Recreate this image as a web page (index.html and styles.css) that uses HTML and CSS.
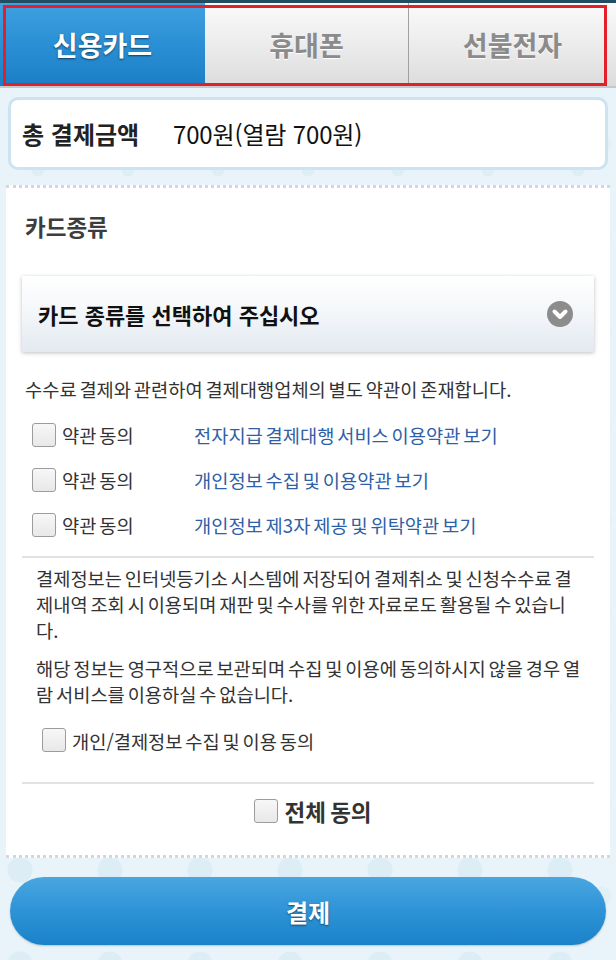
FILE: index.html
```html
<!DOCTYPE html>
<html lang="ko">
<head>
<meta charset="utf-8">
<title>결제</title>
<link rel="stylesheet" href="styles.css">
</head>
<body>
<div class="page">
  <div class="tabs-wrap">
    <nav class="tabs">
      <div class="tab active">신용카드</div>
      <div class="tab">휴대폰</div>
      <div class="tab">선불전자</div>
    </nav>
    <div class="highlight"></div>
  </div>

  <div class="amount">
    <span class="amount-label">총 결제금액</span>
    <span class="amount-value">700원(열람 700원)</span>
  </div>

  <section class="panel">
    <h2 class="section-title">카드종류</h2>
    <div class="select">
      <span>카드 종류를 선택하여 주십시오</span>
      <svg class="select-icon" width="28" height="28" viewBox="0 0 28 28">
        <circle cx="14" cy="14" r="13" fill="#8c8c8c"/>
        <polyline points="8.5,11.5 14,17 19.5,11.5" fill="none" stroke="#fff" stroke-width="4" stroke-linecap="round" stroke-linejoin="round"/>
      </svg>
    </div>

    <p class="notice">수수료 결제와 관련하여 결제대행업체의 별도 약관이 존재합니다.</p>
    <ul class="terms">
      <li><span class="check"></span><span class="agree">약관 동의</span><a class="link">전자지급 결제대행 서비스 이용약관 보기</a></li>
      <li><span class="check"></span><span class="agree">약관 동의</span><a class="link">개인정보 수집 및 이용약관 보기</a></li>
      <li><span class="check"></span><span class="agree">약관 동의</span><a class="link">개인정보 제3자 제공 및 위탁약관 보기</a></li>
    </ul>

    <div class="info">
      <p>결제정보는 인터넷등기소 시스템에 저장되어 결제취소 및 신청수수료 결제내역 조회 시 이용되며 재판 및 수사를 위한 자료로도 활용될 수 있습니다.</p>
      <p>해당 정보는 영구적으로 보관되며 수집 및 이용에 동의하시지 않을 경우 열람 서비스를 이용하실 수 없습니다.</p>
      <div class="personal"><span class="check"></span><span>개인/결제정보 수집 및 이용 동의</span></div>
    </div>

    <div class="all"><span class="check"></span><span>전체 동의</span></div>
  </section>

  <button class="pay">결제</button>
</div>
</body>
</html>
```

FILE: styles.css
```css
html, body {
  margin: 0;
  padding: 0;
}
body {
  width: 616px;
  height: 960px;
  overflow: hidden;
  font-family: "Noto Sans CJK KR", "Noto Sans", sans-serif;
  color: #333;
  background-color: #e8f4f9;
  background-image:
    radial-gradient(circle at 20px 24px, #dcedf5 0 12px, transparent 13px),
    radial-gradient(circle at 62px 50px, #e0f0f7 0 9px, transparent 10px),
    radial-gradient(circle at 38px 76px, #deeef6 0 6px, transparent 7px);
  background-size: 90px 94px, 90px 94px, 90px 94px;
}
.page {
  display: flex;
  flex-direction: column;
}

/* Tabs */
.tabs-wrap {
  position: relative;
}
.tabs {
  display: grid;
  grid-template-columns: 205px 203px 1fr;
  height: 83px;
  border-top: 3px solid #1f4d62;
  border-bottom: 2px solid #c6c9cb;
}
.tab {
  display: flex;
  align-items: center;
  justify-content: center;
  font-size: 27px;
  font-weight: 700;
  color: #8b8b8b;
  text-shadow: 0 1px 1px #fff;
  background: linear-gradient(#fafafa, #e9e9e9 60%, #dcdcdc);
}
.tab + .tab {
  border-left: 1px solid #a0a0a0;
}
.tab.active {
  color: #fff;
  background: linear-gradient(#3fa1e0, #2a8fd4 50%, #1b7fc5);
  text-shadow: 0 1px 2px rgba(0, 0, 0, 0.55);
}
.tab.active + .tab {
  border-left: none;
}
.highlight {
  position: absolute;
  left: 3px;
  top: 5px;
  width: 598px;
  height: 75px;
  border: 3px solid #e41e2b;
  pointer-events: none;
}

/* Amount */
.amount {
  margin: 9px 8px 0;
  height: 73px;
  box-sizing: border-box;
  border: 3px solid #cde3ef;
  border-radius: 10px;
  background: #fff;
  display: flex;
  align-items: center;
  padding-left: 11px;
}
.amount-label {
  font-size: 24px;
  font-weight: 700;
  color: #222;
  width: 151px;
}
.amount-value {
  font-size: 24px;
  color: #111;
  letter-spacing: -0.15px;
}

/* Panel */
.panel {
  margin: 15px 6px 0;
  background: #fff;
  border-top: 3px dotted #d3d7da;
  border-bottom: 3px dotted #d3d7da;
  padding: 23px 16px 0;
  height: 673px;
  box-sizing: border-box;
}
.section-title {
  margin: 0 0 0 3px;
  font-size: 22.5px;
  font-weight: 700;
  color: #3d3d3d;
  line-height: 30px;
}
.select {
  margin-top: 35px;
  height: 76px;
  box-sizing: border-box;
  background: linear-gradient(#ffffff, #f3f6f9 50%, #e2e9f0);
  box-shadow: 0 1px 4px rgba(0, 0, 0, 0.25);
  display: flex;
  align-items: center;
  justify-content: space-between;
  padding: 0 20px 0 16px;
  font-size: 22px;
  font-weight: 700;
  color: #111;
}
.notice {
  margin: 24px 0 0 3px;
  font-size: 18.7px;
  line-height: 26px;
  color: #333;
  word-spacing: -2.4px;
}
.terms {
  list-style: none;
  margin: 10px 0 0;
  padding: 0 0 0 10px;
}
.terms li {
  display: flex;
  align-items: center;
  height: 45px;
  font-size: 18.7px;
  word-spacing: -2.4px;
}
.check {
  display: inline-block;
  flex: none;
  width: 24px;
  height: 24px;
  box-sizing: border-box;
  border: 1.5px solid #9c9c9c;
  border-radius: 3px;
  background: linear-gradient(#f7f7f7, #e8e8e8);
}
.agree {
  margin-left: 6px;
  width: 132px;
  color: #333;
}
.link {
  color: #2f5fa6;
}
.info {
  margin-top: 9px;
  border-top: 2px solid #e2e2e2;
  border-bottom: 2px solid #e2e2e2;
  padding: 7px 10px 30px 14px;
}
.info p {
  margin: 0 0 12px;
  font-size: 18.7px;
  line-height: 26px;
  color: #333;
  word-spacing: -2.4px;
}
.personal {
  display: flex;
  align-items: center;
  gap: 6px;
  margin: 21px 0 0 6px;
  height: 24px;
  font-size: 18.7px;
  word-spacing: -2.4px;
}
.all {
  display: flex;
  align-items: center;
  justify-content: center;
  gap: 6px;
  margin-top: 12px;
  padding-left: 10px;
  height: 30px;
  font-size: 22.5px;
  font-weight: 700;
  color: #333;
  word-spacing: -2px;
}

/* Pay button */
.pay {
  margin: 19px 10px 0;
  height: 68px;
  border: none;
  border-radius: 34px;
  background: linear-gradient(#4aa6e1, #2e93d6 50%, #1a82c9);
  box-shadow: 0 1px 2px rgba(0, 0, 0, 0.2);
  font-family: "Noto Sans CJK KR", "Noto Sans", sans-serif;
  font-size: 24px;
  font-weight: 700;
  color: #fff;
  text-shadow: 0 1px 2px rgba(0, 0, 0, 0.5);
}
```
